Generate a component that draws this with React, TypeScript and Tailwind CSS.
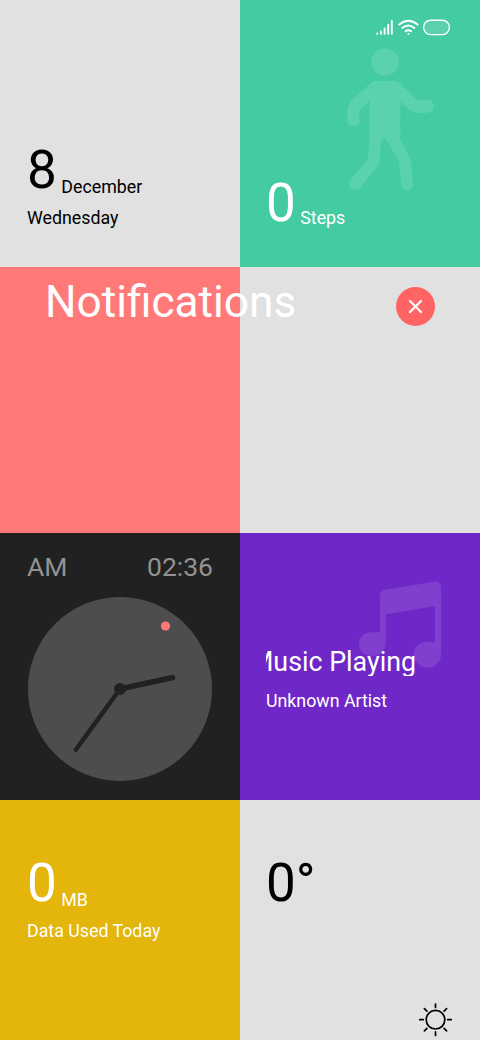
import React from 'react'

const StatusBar = () => {
  return (
    <svg className="absolute left-[135px] top-[17px]" width="78" height="20" viewBox="0 0 78 20" fill="none" stroke="#fff" strokeLinecap="round">
      <path strokeWidth="1.9" d="M2.2 16.4v.3M5.9 14.4v2.3M9.6 11.4v5.3M13.2 7.7v9M16.8 3.9v12.800" />
      <path strokeWidth="1.9" d="M24.2 7.6Q33.4 -.2 42.6 7.6M27.4 11Q33.4 6 39.4 11M30.6 14.3Q33.4 12.1 36.2 14.3" />
      <circle cx="33.4" cy="16.9" r="1" fill="#fff" stroke="none" />
      <rect x="48.6" y="3.2" width="25.8" height="14.4" rx="7" strokeWidth="1.4" fill="#fff" fillOpacity=".12" />
    </svg>
  )
}

const WalkIcon = () => {
  return (
    <svg className="absolute left-[90px] top-[40px]" width="120" height="160" viewBox="0 0 360 480" fill="#5ad2ae">
      <circle cx="165" cy="66" r="41.5" />
      <path d="M135 122H196Q202 122 207 127L252 170Q262 182 277 181L294 179A19.500 19.500 0 0 1 298 217Q280 221 263 219Q246 217 236 208L211 185V290H206L234 342Q243 357 244 373L249 433A17.500 17.500 0 0 1 214 435L208 372Q208 364 203 356L167 297H154L150 352Q148 372 135 388L90 444A19.500 19.500 0 0 1 59 421L106 367Q113 358 114 348L119 288V182L98 202Q86 212 87 225L89 243A18.500 18.500 0 0 1 53 246Q50 228 52 212Q54 192 68 178L124 128Q129 122 135 122Z" />
    </svg>
  )
}

const MusicIcon = () => {
  return (
    <svg className="absolute left-[110px] top-[40.500px]" width="100" height="100" viewBox="330 40 300 300" fill="#813fce">
      <path d="M435 87L583 63Q603 61 603 81V280A40 40 0 0 1 562 321C539 321 521 303 521 281C521 259 538 244 560 244H585V136L437 161V247C437 270 419 286 396 286C374 286 357 271 357 250C357 229 374 215 397 215H420V104Q420 90 435 87Z" />
    </svg>
  )
}

const Clock = () => {
  return (
    <svg className="mx-auto mt-[17.400px] block" width="184" height="184" viewBox="0 0 184 184">
      <circle cx="92" cy="92" r="92" fill="#4d4d4d" />
      <circle cx="137.500" cy="29" r="4.600" fill="#ff7979" />
      <g stroke="#212121" strokeLinecap="round">
        <path strokeWidth="5.600" d="M92 92L144.500 80.500" />
        <path strokeWidth="4.500" d="M92 92L47.800 152.800" />
      </g>
      <circle cx="92" cy="92" r="6" fill="#212121" />
    </svg>
  )
}

const SunIcon = () => {
  return (
    <svg className="absolute left-[178px] top-[202px]" width="36" height="36" viewBox="0 0 36 36" fill="none" stroke="#000" strokeWidth="1.700" strokeLinecap="round">
      <circle cx="17.500" cy="17.700" r="9.300" />
      <path d="M17.500 2v3.500M17.500 29.900v3.500M1.800 17.700h3.500M29.700 17.700h3.500M6.400 6.600l2.500 2.500M26.100 26.300l2.500 2.500M6.400 28.800l2.500-2.500M26.100 9.100l2.500-2.500" />
    </svg>
  )
}

const App = () => {
  return (
    <div className="relative grid h-[1040px] w-[480px] grid-cols-2 grid-rows-[266.5px_266.5px_266.800px_240.200px] overflow-hidden bg-[#e1e1e1] font-[Roboto,sans-serif] text-[17.800px] leading-[18px] text-white">
      <div className="pl-[27px] pt-[144px] text-black">
        <div className="flex gap-[4.500px]">
          <span className="text-[53px] leading-[53px]">8</span>
          <span className="pt-[34px]">December</span>
        </div>
        <p className="mt-[12px]">Wednesday</p>
      </div>

      <div className="relative bg-[#44cba1] pl-[26px] pt-[177px]">
        <WalkIcon />
        <StatusBar />
        <div className="relative flex gap-[4.500px]">
          <span className="text-[53px] leading-[53px]">0</span>
          <span className="pt-[32px]">Steps</span>
        </div>
      </div>

      <div className="bg-[#ff7979]">
        <h1 className="relative z-10 ml-[45px] mt-[13.500px] whitespace-nowrap text-[44.200px] leading-[44px]">Notifications</h1>
      </div>

      <div className="flex items-start justify-end pr-[45px] pt-[20.500px]">
        <button className="flex size-[39px] items-center justify-center rounded-full bg-[#ff6363]" aria-label="Close">
          <svg width="15" height="15" viewBox="0 0 15 15" stroke="#fff" strokeWidth="2.300" strokeLinecap="round">
            <path d="M2 2L13 13M13 2L2 13" />
          </svg>
        </button>
      </div>

      <div className="bg-[#212121] pt-[20.500px]">
        <div className="flex justify-between px-[27px] text-[26.500px] leading-[26.500px] text-[#929292]">
          <span>AM</span>
          <span>02:36</span>
        </div>
        <Clock />
      </div>

      <div className="relative bg-[#7027c8] pl-[26px] pt-[116px]">
        <MusicIcon />
        <div className="relative flex h-[27px] w-[150px] justify-end overflow-hidden whitespace-nowrap text-[26.800px] leading-[26.800px]">
          <span>Music Playing</span>
        </div>
        <p className="relative mt-[16px]">Unknown Artist</p>
      </div>

      <div className="bg-[#e4b50a] pl-[27px] pt-[57.500px]">
        <div className="flex gap-[4.500px]">
          <span className="text-[53px] leading-[53px]">0</span>
          <span className="pt-[33.500px]">MB</span>
        </div>
        <p className="mt-[11.500px]">Data Used Today</p>
      </div>

      <div className="relative pl-[26px] pt-[57px] text-black">
        <span className="block text-[53px] leading-[53px]">0°</span>
        <SunIcon />
      </div>
    </div>
  )
}

export default App;
